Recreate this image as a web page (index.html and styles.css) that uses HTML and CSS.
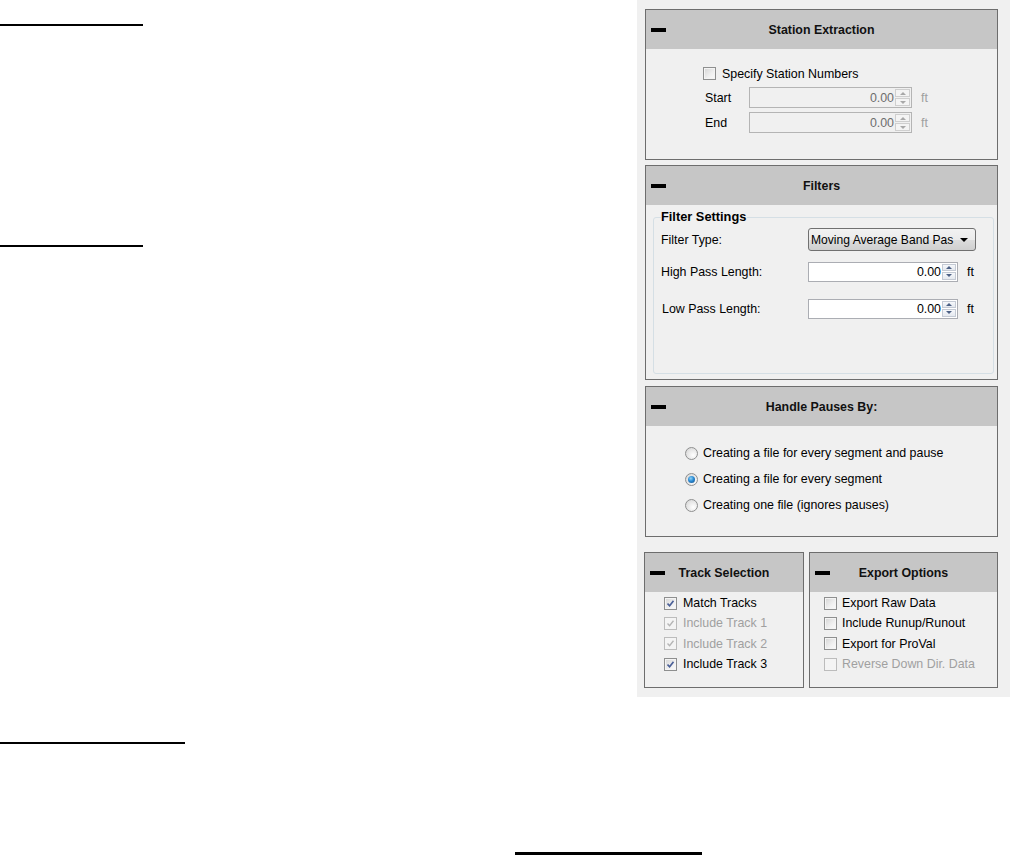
FILE: index.html
```html
<!DOCTYPE html>
<html>
<head>
<meta charset="utf-8">
<link rel="stylesheet" href="styles.css">
</head>
<body>
<div class="page">
  <div class="top">
    <div class="doc">
      <div class="rule r1"></div>
      <div class="rule r2"></div>
    </div>
    <aside class="sidebar">
      <section class="panel p-station">
        <div class="phead"><span class="dash"></span><span class="ptitle">Station Extraction</span><span></span></div>
        <div class="pbody station-body">
          <div class="chk-row"><span class="cb"></span><span>Specify Station Numbers</span></div>
          <div class="field-row">
            <span class="flabel">Start</span>
            <div class="num dis"><span class="val">0.00</span><span class="spin"><i class="up"></i><i class="dn"></i></span></div>
            <span class="unit dis-t">ft</span>
          </div>
          <div class="field-row r-end">
            <span class="flabel">End</span>
            <div class="num dis"><span class="val">0.00</span><span class="spin"><i class="up"></i><i class="dn"></i></span></div>
            <span class="unit dis-t">ft</span>
          </div>
        </div>
      </section>

      <section class="panel p-filters">
        <div class="phead"><span class="dash"></span><span class="ptitle">Filters</span><span></span></div>
        <div class="pbody filters-body">
          <div class="group">
            <div class="glabel">Filter Settings</div>
            <div class="frow fr1">
              <span class="fl">Filter Type:</span>
              <div class="combo"><span class="ctext">Moving Average Band Pas</span><i class="caret"></i></div>
            </div>
            <div class="frow fr2">
              <span class="fl">High Pass Length:</span>
              <div class="num en"><span class="val">0.00</span><span class="spin"><i class="up"></i><i class="dn"></i></span></div>
              <span class="unit2">ft</span>
            </div>
            <div class="frow fr3">
              <span class="fl fl-low">Low Pass Length:</span>
              <div class="num en"><span class="val">0.00</span><span class="spin"><i class="up"></i><i class="dn"></i></span></div>
              <span class="unit2">ft</span>
            </div>
          </div>
        </div>
      </section>

      <section class="panel p-pauses">
        <div class="phead"><span class="dash"></span><span class="ptitle">Handle Pauses By:</span><span></span></div>
        <div class="pbody pauses-body">
          <div class="radio-row"><span class="rb"></span><span>Creating a file for every segment and pause</span></div>
          <div class="radio-row"><span class="rb on"></span><span>Creating a file for every segment</span></div>
          <div class="radio-row"><span class="rb"></span><span>Creating one file (ignores pauses)</span></div>
        </div>
      </section>

      <div class="duo">
        <section class="panel p-track">
          <div class="phead"><span class="dash"></span><span class="ptitle">Track Selection</span><span></span></div>
          <div class="pbody list-body track-body">
            <div class="li"><span class="cb on"></span><span>Match Tracks</span></div>
            <div class="li dis-t"><span class="cb on off"></span><span>Include Track 1</span></div>
            <div class="li dis-t"><span class="cb on off"></span><span>Include Track 2</span></div>
            <div class="li"><span class="cb on"></span><span>Include Track 3</span></div>
          </div>
        </section>
        <section class="panel p-export">
          <div class="phead"><span class="dash"></span><span class="ptitle">Export Options</span><span></span></div>
          <div class="pbody list-body export-body">
            <div class="li"><span class="cb"></span><span>Export Raw Data</span></div>
            <div class="li"><span class="cb"></span><span>Include Runup/Runout</span></div>
            <div class="li"><span class="cb"></span><span>Export for ProVal</span></div>
            <div class="li dis-t"><span class="cb off"></span><span>Reverse Down Dir. Data</span></div>
          </div>
        </section>
      </div>
    </aside>
  </div>
  <div class="rule r3"></div>
  <div class="rule r4"></div>
</div>
</body>
</html>
```

FILE: styles.css
```css
html, body {
  margin: 0;
  padding: 0;
  background: #ffffff;
}
body {
  font-family: "Liberation Sans", Arial, sans-serif;
  font-size: 12.4px;
  color: #000;
}
.page {
  width: 1010px;
  height: 855px;
  overflow: hidden;
}
.top {
  display: flex;
  height: 697px;
}
.doc {
  width: 637px;
  padding-top: 24px;
  box-sizing: border-box;
}
.rule {
  background: #000;
  height: 2px;
}
.r1 { width: 143px; }
.r2 { width: 143px; margin-top: 219px; }
.r3 { width: 185px; margin-top: 45px; }
.r4 { width: 187px; height: 3px; margin-top: 108px; margin-left: 515px; }

.sidebar {
  width: 373px;
  height: 697px;
  background: #f0f0f0;
  box-sizing: border-box;
  padding: 9px 12px 0 8px;
  display: flex;
  flex-direction: column;
}

.panel {
  border: 1px solid #6d6d6d;
  background: #f0f0f0;
  box-sizing: border-box;
  display: flex;
  flex-direction: column;
}
.phead {
  height: 39px;
  flex: none;
  background: #c6c6c6;
  display: grid;
  grid-template-columns: 1fr auto 1fr;
  align-items: center;
}
.dash {
  width: 15px;
  height: 4px;
  background: #000;
  margin-left: 5px;
  margin-top: 1px;
}
.ptitle {
  font-weight: bold;
  color: #111;
}
.pbody {
  flex: 1;
}

.p-station { height: 151px; }
.p-filters { height: 215px; margin-top: 5px; }
.p-pauses { height: 151px; margin-top: 6px; }
.duo {
  display: flex;
  gap: 5px;
  margin-top: 15px;
  margin-left: -1px;
}
.p-track { width: 160px; height: 136px; }
.p-export { width: 189px; height: 136px; }

/* checkbox */
.cb {
  width: 13px;
  height: 13px;
  box-sizing: border-box;
  border: 1px solid #8e8f8f;
  background: linear-gradient(135deg, #d4d4d4 0%, #f0f0f0 60%, #fbfbfb 100%);
  box-shadow: inset 0 0 0 1px #f4f4f4;
  flex: none;
  display: inline-flex;
  align-items: center;
  justify-content: center;
}
.cb.on::after {
  content: "";
  width: 7px;
  height: 7px;
  background: url("data:image/svg+xml;utf8,<svg xmlns='http://www.w3.org/2000/svg' width='7' height='7' viewBox='0 0 7 7'><path d='M0.5 3.6 L2.6 5.8 L6.5 0.8' fill='none' stroke='%234a5f97' stroke-width='1.6'/></svg>") no-repeat center;
}
.cb.off {
  border-color: #bcbcbc;
  background: #f4f4f4;
  box-shadow: none;
}
.cb.on.off::after {
  background: url("data:image/svg+xml;utf8,<svg xmlns='http://www.w3.org/2000/svg' width='7' height='7' viewBox='0 0 7 7'><path d='M0.5 3.6 L2.6 5.8 L6.5 0.8' fill='none' stroke='%23b5b5b5' stroke-width='1.4'/></svg>") no-repeat center;
}

/* radio */
.rb {
  width: 13px;
  height: 13px;
  box-sizing: border-box;
  border-radius: 50%;
  border: 1px solid #8e8f8f;
  background: radial-gradient(circle at 65% 65%, #ffffff 0%, #e6e6e6 55%, #cfcfcf 100%);
  flex: none;
  display: inline-flex;
  align-items: center;
  justify-content: center;
}
.rb.on::after {
  content: "";
  width: 7px;
  height: 7px;
  border-radius: 50%;
  background: radial-gradient(circle at 40% 35%, #8fd3f5 0%, #2a8ad4 45%, #154a7e 100%);
}

.dis-t { color: #a0a0a0; }

/* station */
.station-body {
  padding: 18px 0 0 57px;
}
.chk-row {
  display: flex;
  align-items: center;
  gap: 6px;
  height: 13px;
}
.field-row {
  display: flex;
  align-items: center;
  height: 21px;
  margin-top: 7px;
  padding-left: 2px;
}
.field-row.r-end { margin-top: 4px; }
.flabel { width: 44px; }
.num {
  display: flex;
  align-items: stretch;
  box-sizing: border-box;
  border: 1px solid #adadad;
  height: 21px;
}
.num .val {
  flex: 1;
  text-align: right;
  align-self: center;
  padding-right: 1px;
}
.num.dis {
  width: 163px;
  background: #f0f0f0;
  border-color: #b4b4b4;
  color: #6d6d6d;
}
.spin {
  width: 15px;
  display: flex;
  flex-direction: column;
  margin: 1px 1px 1px 0;
  gap: 1px;
}
.spin i {
  flex: 1;
  border: 1px solid #cfcfcf;
  background: #f4f4f4;
  display: flex;
  align-items: center;
  justify-content: center;
}
.spin i.up::after {
  content: "";
  border-left: 3px solid transparent;
  border-right: 3px solid transparent;
  border-bottom: 3px solid #a8a8a8;
}
.spin i.dn::after {
  content: "";
  border-left: 3px solid transparent;
  border-right: 3px solid transparent;
  border-top: 3px solid #a8a8a8;
}
.unit { margin-left: 9px; }

/* filters */
.filters-body {
  padding: 12px 3px 5px 7px;
  display: flex;
}
.group {
  flex: 1;
  border: 1px solid #d5dfe5;
  border-radius: 3px;
  box-sizing: border-box;
  padding-left: 7px;
}
.glabel {
  font-weight: bold;
  font-size: 12.8px;
  display: block;
  width: fit-content;
  background: #f0f0f0;
  line-height: 14px;
  height: 14px;
  margin-top: -8px;
  padding: 0 1px 0 0;
}
.frow {
  display: flex;
  align-items: center;
}
.fl { width: 147px; }
.fl-low { padding-left: 1px; width: 146px; }
.fr1 { margin-top: 4px; height: 23px; }
.fr2 { margin-top: 11px; height: 19px; }
.fr3 { margin-top: 18px; height: 19px; }
.combo {
  width: 168px;
  height: 23px;
  box-sizing: border-box;
  border: 1px solid #707070;
  border-radius: 3px;
  background: linear-gradient(#f2f2f2 0%, #ebebeb 50%, #dddddd 51%, #cfcfcf 100%);
  display: flex;
  align-items: center;
  justify-content: space-between;
  padding: 0 7px 0 2px;
  white-space: nowrap;
  overflow: hidden;
}
.ctext { font-size: 12.1px; }
.caret {
  flex: none;
  border-left: 4px solid transparent;
  border-right: 4px solid transparent;
  border-top: 4px solid #000;
  margin-left: 6px;
}
.num.en {
  width: 150px;
  height: 20px;
  background: #fff;
  border-color: #abadb3;
}
.num.en .spin {
  width: 14px;
}
.num.en .spin i {
  border-color: #c4cad4;
  background: linear-gradient(#f6f8fb, #e5e9ef);
}
.num.en .spin i.up::after { border-bottom-color: #4d6185; }
.num.en .spin i.dn::after { border-top-color: #4d6185; }
.unit2 { margin-left: 9px; }

/* pauses */
.pauses-body {
  padding: 19px 0 0 39px;
  display: flex;
  flex-direction: column;
  gap: 10px;
}
.radio-row {
  display: flex;
  align-items: center;
  gap: 5px;
  height: 16px;
}

/* lists */
.list-body {
  padding-top: 1px;
}
.track-body { padding-left: 19px; }
.export-body { padding-left: 14px; }
.li {
  display: flex;
  align-items: center;
  height: 20.3px;
  gap: 6px;
  white-space: nowrap;
}
.export-body .li { gap: 5px; }
```
